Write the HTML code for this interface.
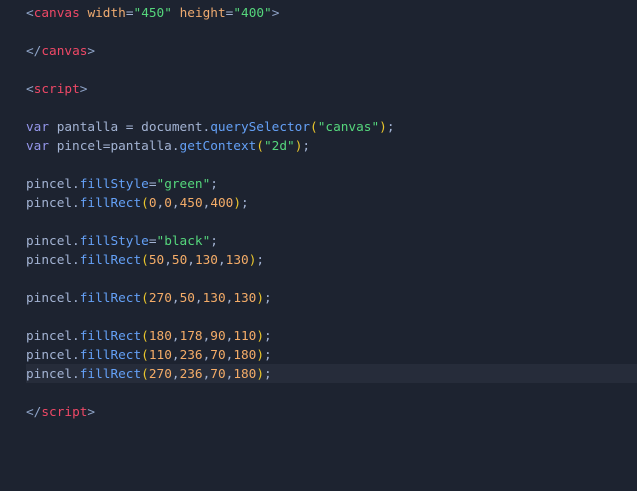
<!DOCTYPE html><html><head><style>
body{margin:0;width:637px;height:491px;background:#1d2330;overflow:hidden}
pre{margin:0;position:absolute;top:4px;left:26px;font:12.75px/19px "DejaVu Sans Mono","Liberation Mono",monospace;color:#a3b3d3}
.hl{position:absolute;left:26px;right:0;top:364px;height:19px;background:#262c3a}
.t{color:#ee4866}.a{color:#eeaa70}.s{color:#55d67c}.m{color:#64a0f6}.n{color:#f4ac68}.p{color:#eac62c}.k{color:#9496ea}.c{color:#8fa4c8}
</style></head><body><div class="hl"></div><pre><span class="c">&lt;</span><span class="t">canvas</span> <span class="a">width</span>=<span class="s">"450"</span> <span class="a">height</span>=<span class="s">"400"</span><span class="c">&gt;</span>

<span class="c">&lt;/</span><span class="t">canvas</span><span class="c">&gt;</span>

<span class="c">&lt;</span><span class="t">script</span><span class="c">&gt;</span>

<span class="k">var</span> pantalla = document.<span class="m">querySelector</span><span class="p">(</span><span class="s">"canvas"</span><span class="p">)</span>;
<span class="k">var</span> pincel=pantalla.<span class="m">getContext</span><span class="p">(</span><span class="s">"2d"</span><span class="p">)</span>;

pincel.<span class="m">fillStyle</span>=<span class="s">"green"</span>;
pincel.<span class="m">fillRect</span><span class="p">(</span><span class="n">0</span>,<span class="n">0</span>,<span class="n">450</span>,<span class="n">400</span><span class="p">)</span>;

pincel.<span class="m">fillStyle</span>=<span class="s">"black"</span>;
pincel.<span class="m">fillRect</span><span class="p">(</span><span class="n">50</span>,<span class="n">50</span>,<span class="n">130</span>,<span class="n">130</span><span class="p">)</span>;

pincel.<span class="m">fillRect</span><span class="p">(</span><span class="n">270</span>,<span class="n">50</span>,<span class="n">130</span>,<span class="n">130</span><span class="p">)</span>;

pincel.<span class="m">fillRect</span><span class="p">(</span><span class="n">180</span>,<span class="n">178</span>,<span class="n">90</span>,<span class="n">110</span><span class="p">)</span>;
pincel.<span class="m">fillRect</span><span class="p">(</span><span class="n">110</span>,<span class="n">236</span>,<span class="n">70</span>,<span class="n">180</span><span class="p">)</span>;
pincel.<span class="m">fillRect</span><span class="p">(</span><span class="n">270</span>,<span class="n">236</span>,<span class="n">70</span>,<span class="n">180</span><span class="p">)</span>;

<span class="c">&lt;/</span><span class="t">script</span><span class="c">&gt;</span></pre></body></html>
